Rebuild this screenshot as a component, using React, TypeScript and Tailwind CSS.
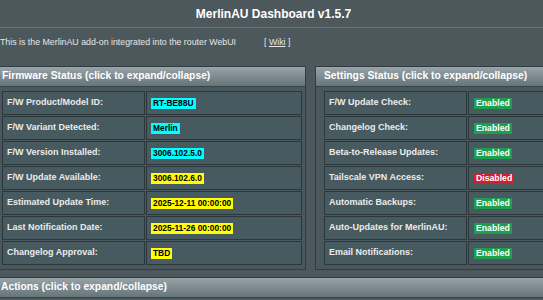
const firmwareRows: { label: string; value: string; tone: "cyan" | "yellow" }[] = [
  { label: "F/W Product/Model ID:", value: "RT-BE88U", tone: "cyan" },
  { label: "F/W Variant Detected:", value: "Merlin", tone: "cyan" },
  { label: "F/W Version Installed:", value: "3006.102.5.0", tone: "cyan" },
  { label: "F/W Update Available:", value: "3006.102.6.0", tone: "yellow" },
  { label: "Estimated Update Time:", value: "2025-12-11 00:00:00", tone: "yellow" },
  { label: "Last Notification Date:", value: "2025-11-26 00:00:00", tone: "yellow" },
  { label: "Changelog Approval:", value: "TBD", tone: "yellow" },
];

const settingsRows: { label: string; enabled: boolean }[] = [
  { label: "F/W Update Check:", enabled: true },
  { label: "Changelog Check:", enabled: true },
  { label: "Beta-to-Release Updates:", enabled: true },
  { label: "Tailscale VPN Access:", enabled: false },
  { label: "Automatic Backups:", enabled: true },
  { label: "Auto-Updates for MerlinAU:", enabled: true },
  { label: "Email Notifications:", enabled: true },
];

function PanelHeader({ title }: { title: string }) {
  return (
    <div className="flex h-[20px] items-center border-b border-[#36434a] bg-gradient-to-b from-[#97a4a9] to-[#66757a] pl-[8px] text-[10.3px] font-bold leading-none text-white">
      {title}
    </div>
  );
}

function Row({ label, children }: { label: string; children: React.ReactNode }) {
  return (
    <div className="flex h-[24px] gap-[1px]">
      <div className="flex w-[143px] shrink-0 items-center border border-[#2b373b] bg-[#475a5f] pl-[4px] text-[9px] font-bold text-[#ececec]">
        {label}
      </div>
      <div className="flex flex-1 items-center border border-[#2b373b] bg-[#475a5f] pl-[4px]">
        {children}
      </div>
    </div>
  );
}

export default function App() {
  return (
    <div
      className="relative h-[300px] w-[543px] overflow-hidden bg-[#4d585c] text-white"
      style={{ fontFamily: '"Liberation Sans", Arial, sans-serif' }}
    >
      <div className="flex h-[28px] items-center justify-center border-b border-[#66737a] pl-[4px] text-[12px] font-bold">
        MerlinAU Dashboard v1.5.7
      </div>

      <div className="mt-[8px] flex h-[14px] items-center whitespace-nowrap text-[8.8px] text-[#e6e6e6]">
        <span>This is the MerlinAU add-on integrated into the router WebUI</span>
        <span className="ml-[28px]">
          [ <span className="underline">Wiki</span> ]
        </span>
      </div>

      <div className="ml-[-7px] mt-[16px] flex gap-[9px]">
        <div className="w-[313px] shrink-0 border border-[#303c40] bg-[#4a585d]">
          <PanelHeader title="Firmware Status (click to expand/collapse)" />
          <div className="flex flex-col gap-[1px] pb-[4px] pl-[8px] pr-[3px] pt-[4px]">
            {firmwareRows.map((row) => (
              <Row key={row.label} label={row.label}>
                <span
                  className={`px-[2px] text-[8.4px] font-bold leading-[11px] text-black ${
                    row.tone === "cyan" ? "bg-[#00ffff]" : "bg-[#ffff00]"
                  }`}
                >
                  {row.value}
                </span>
              </Row>
            ))}
          </div>
        </div>

        <div className="w-[313px] shrink-0 border border-[#303c40] bg-[#4a585d]">
          <PanelHeader title="Settings Status (click to expand/collapse)" />
          <div className="flex flex-col gap-[1px] pb-[4px] pl-[8px] pr-[3px] pt-[4px]">
            {settingsRows.map((row) => (
              <Row key={row.label} label={row.label}>
                <span
                  className={`ml-[1px] px-[2px] text-[8.7px] font-bold leading-[11px] text-white ${
                    row.enabled ? "bg-[#1f9e4e]" : "bg-[#d21f2e]"
                  }`}
                >
                  {row.enabled ? "Enabled" : "Disabled"}
                </span>
              </Row>
            ))}
          </div>
        </div>
      </div>

      <div className="ml-[-7px] mt-[7px] w-[560px] border-t border-[#303c40]">
        <PanelHeader title="Actions (click to expand/collapse)" />
      </div>
    </div>
  );
}
